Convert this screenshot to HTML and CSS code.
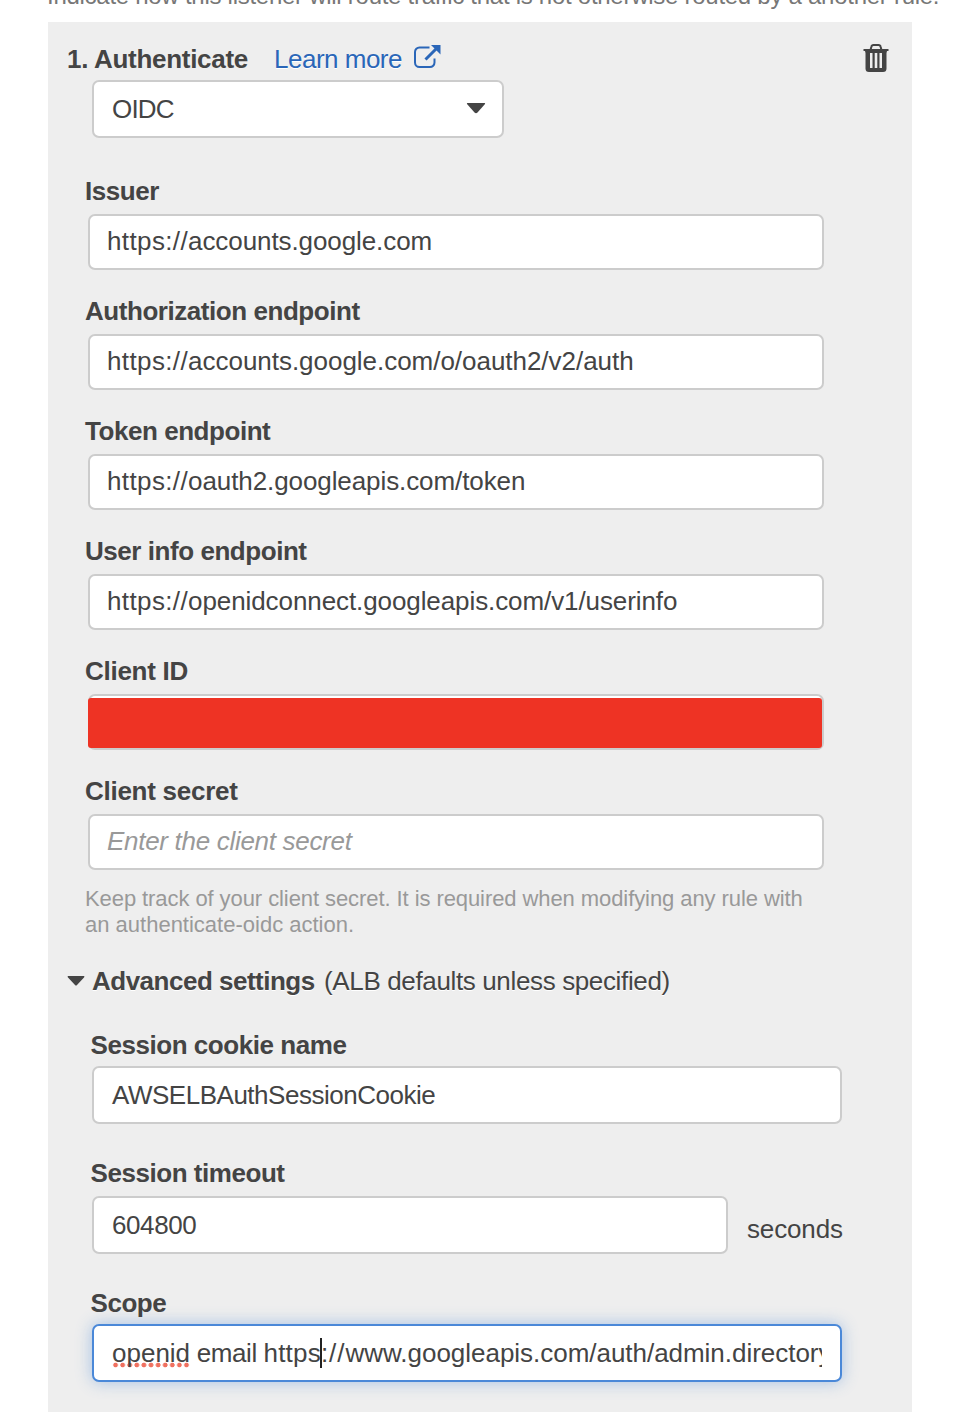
FILE: index.html
```html
<!DOCTYPE html>
<html lang="en">
<head>
<meta charset="utf-8">
<title>Authenticate</title>
<link rel="stylesheet" href="styles.css">
</head>
<body>
<p class="intro">Indicate how this listener will route traffic that is not otherwise routed by a another rule.</p>
<main class="panel">
  <header class="heading">
    <h1 class="title">1. Authenticate</h1>
    <a class="learn">Learn more</a>
    <svg class="external" width="28" height="26" viewBox="0 0 28 26">
      <path d="M15.500 3.500H5.500A4.500 4.500 0 0 0 1 8V18.500A4.500 4.500 0 0 0 5.500 23H16A4.500 4.500 0 0 0 20.500 18.500V14.500" fill="none" stroke="#2a66b8" stroke-width="2"/>
      <path d="M11.500 15.500 22 5" stroke="#2a66b8" stroke-width="3"/>
      <path d="M17 1H26.500V10.500Z" fill="#2a66b8"/>
    </svg>
    <svg class="trash" width="26" height="28" viewBox="0 0 26 28">
      <path d="M7.500 6 8.300 3Q8.700 1 10.500 1H15.500Q17.300 1 17.700 3L18.500 6" fill="none" stroke="#444" stroke-width="2"/>
      <path fill="#444" fill-rule="evenodd" d="M.5 5H25.500V7H24L23.500 9V24.500Q23.500 28 20 28H6Q2.500 28 2.500 24.500V9L2 7H.5ZM7 9V24H9.500V9ZM11.700 9V24H14.300V9ZM16.500 9V24H19V9Z"/>
    </svg>
  </header>
  <div class="box select"><span class="oidc">OIDC</span><svg width="20" height="12" viewBox="0 0 20 12"><path d="M1.500 1H18.500Q19.500 1 19 2L11.500 10.500Q10 12 8.500 10.500L1 2Q.5 1 1.500 1Z" fill="#444"/></svg></div>

  <section class="fields">
    <div class="field"><label>Issuer</label><div class="box"><span class="url"><span class="scheme">https://</span>accounts.google.com</span></div></div>
    <div class="field"><label>Authorization endpoint</label><div class="box"><span class="url long"><span class="scheme">https://</span>accounts.google.com/o/oauth2/v2/auth</span></div></div>
    <div class="field"><label>Token endpoint</label><div class="box"><span class="url"><span class="scheme">https://</span>oauth2.googleapis.com/token</span></div></div>
    <div class="field"><label>User info endpoint</label><div class="box"><span class="url"><span class="scheme">https://</span>openidconnect.googleapis.com/v1/userinfo</span></div></div>
    <div class="field"><label class="client">Client ID</label><div class="box redacted"></div></div>
    <div class="field"><label class="client">Client secret</label><div class="box"><span class="placeholder">Enter the client secret</span></div></div>
  </section>
  <p class="hint"><span class="hint-first">Keep track of your client secret. It is required when modifying any rule with</span><br>an authenticate-oidc action.</p>

  <div class="advanced"><svg width="18" height="10" viewBox="0 0 18 10"><path d="M1 0H17Q18 .5 17 1.500L10 9Q9 10 8 9L1 1.500Q0 .5 1 0Z" fill="#444"/></svg><b>Advanced settings</b><span class="defaults">(ALB defaults unless specified)</span></div>

  <section class="settings">
    <label>Session cookie name</label>
    <div class="box"><span class="cookie">AWSELBAuthSessionCookie</span></div>
    <label class="later">Session timeout</label>
    <div class="row"><div class="box short"><span class="number">604800</span></div><span class="unit">seconds</span></div>
    <label class="later">Scope</label>
    <div class="box focused"><div class="clip"><span class="typo">openid</span><span class="email"> email </span><span class="https">https</span><i class="caret"></i><span class="url long"><span class="slashes">://</span>www.googleapis.com/auth/admin.directory</span></div></div>
  </section>
</main>
</body>
</html>
```
FILE: styles.css
```css
* { box-sizing: border-box; }
body {
  margin: 0;
  width: 962px;
  height: 1418px;
  overflow: hidden;
  background: #fff;
  color: #444;
  font: 26px/30px "Liberation Sans", Arial, sans-serif;
  white-space: nowrap;
}
.intro {
  margin: -19px 0 11px 47px;
  color: #777;
  font-size: 24px;
  letter-spacing: -.27px;
}
.panel {
  width: 864px;
  height: 1390px;
  margin-left: 48px;
  padding-top: 22px;
  background: #eee;
}
.heading {
  display: flex;
  height: 36px;
  padding: 0 23px 0 19px;
}
.title {
  margin: 0;
  width: 207px;
  font-size: 26px;
  letter-spacing: -.3px;
}
.learn {
  width: 140px;
  color: #2a66b8;
  letter-spacing: -.5px;
  text-shadow: 0 1px 0 #fff;
}
.trash { margin-left: auto; }
.box {
  display: flex;
  align-items: center;
  border: 2px solid #ccc;
  border-radius: 7px;
  background: #fff;
}
.select {
  width: 412px;
  height: 58px;
  margin-left: 44px;
  padding: 0 16px 0 18px;
  justify-content: space-between;
}
.select svg { margin-top: -3px; }
.oidc { letter-spacing: -.8px; }
.url { letter-spacing: -.09px; }
.url.long { letter-spacing: -.03px; }
.scheme { letter-spacing: .38px; }
.slashes { letter-spacing: 1px; }
.fields {
  display: grid;
  gap: 26px;
  margin: 38px 0 0 40px;
}
.field { width: 736px; }
label {
  display: block;
  height: 30px;
  font-weight: bold;
  letter-spacing: -.45px;
}
label.client { letter-spacing: -.27px; }
.field label { margin: 0 0 8px -3px; }
.field .box { height: 56px; padding: 0 17px 2px; }
.field .redacted { padding: 0; align-items: stretch; }
.redacted::before {
  content: "";
  width: 734px;
  flex: none;
  margin: 2px 0 0 -2px;
  border-radius: 3px;
  background: #ee3324;
}
.placeholder { color: #999; font-style: italic; letter-spacing: -.3px; }
.hint {
  margin: 16px 0 28px 37px;
  color: #999;
  font-size: 22px;
  line-height: 26px;
}
.hint-first { letter-spacing: -.08px; }
.advanced {
  display: flex;
  height: 30px;
  padding-left: 19px;
  text-shadow: 0 1px 0 #fff;
}
.advanced svg { margin: 10px 7px 0 0; }
.advanced b { width: 232px; letter-spacing: -.5px; }
.defaults { letter-spacing: -.36px; }
.settings { margin: 34px 0 0 44px; width: 752px; }
.settings label { margin-left: -1.5px; }
.settings .box { width: 750px; height: 58px; padding: 0 18px; margin-top: 6px; }
.settings .later { margin-top: 34px; }
.cookie { letter-spacing: -.48px; }
.number { letter-spacing: -.4px; }
.row { display: flex; padding-top: 2px; }
.settings .short { flex: none; width: 636px; }
.unit { margin: 24px 0 0 19px; height: 30px; letter-spacing: -.15px; }
.settings .focused {
  border-color: #4a88d8;
  box-shadow: 0 0 16px rgba(74, 136, 216, .45);
}
.clip { display: flex; overflow: hidden; width: 100%; white-space: pre; }
.email { letter-spacing: -.45px; }
.https { letter-spacing: .2px; }
.typo {
  padding-bottom: 3px;
  margin-bottom: -3px;
  background: radial-gradient(circle, #f0705f 2px, transparent 2.700px) 0 24px / 7.100px 6px repeat-x;
}
.caret { flex: none; width: 2px; height: 30px; margin: 0 -1px; background: #222; }
```
